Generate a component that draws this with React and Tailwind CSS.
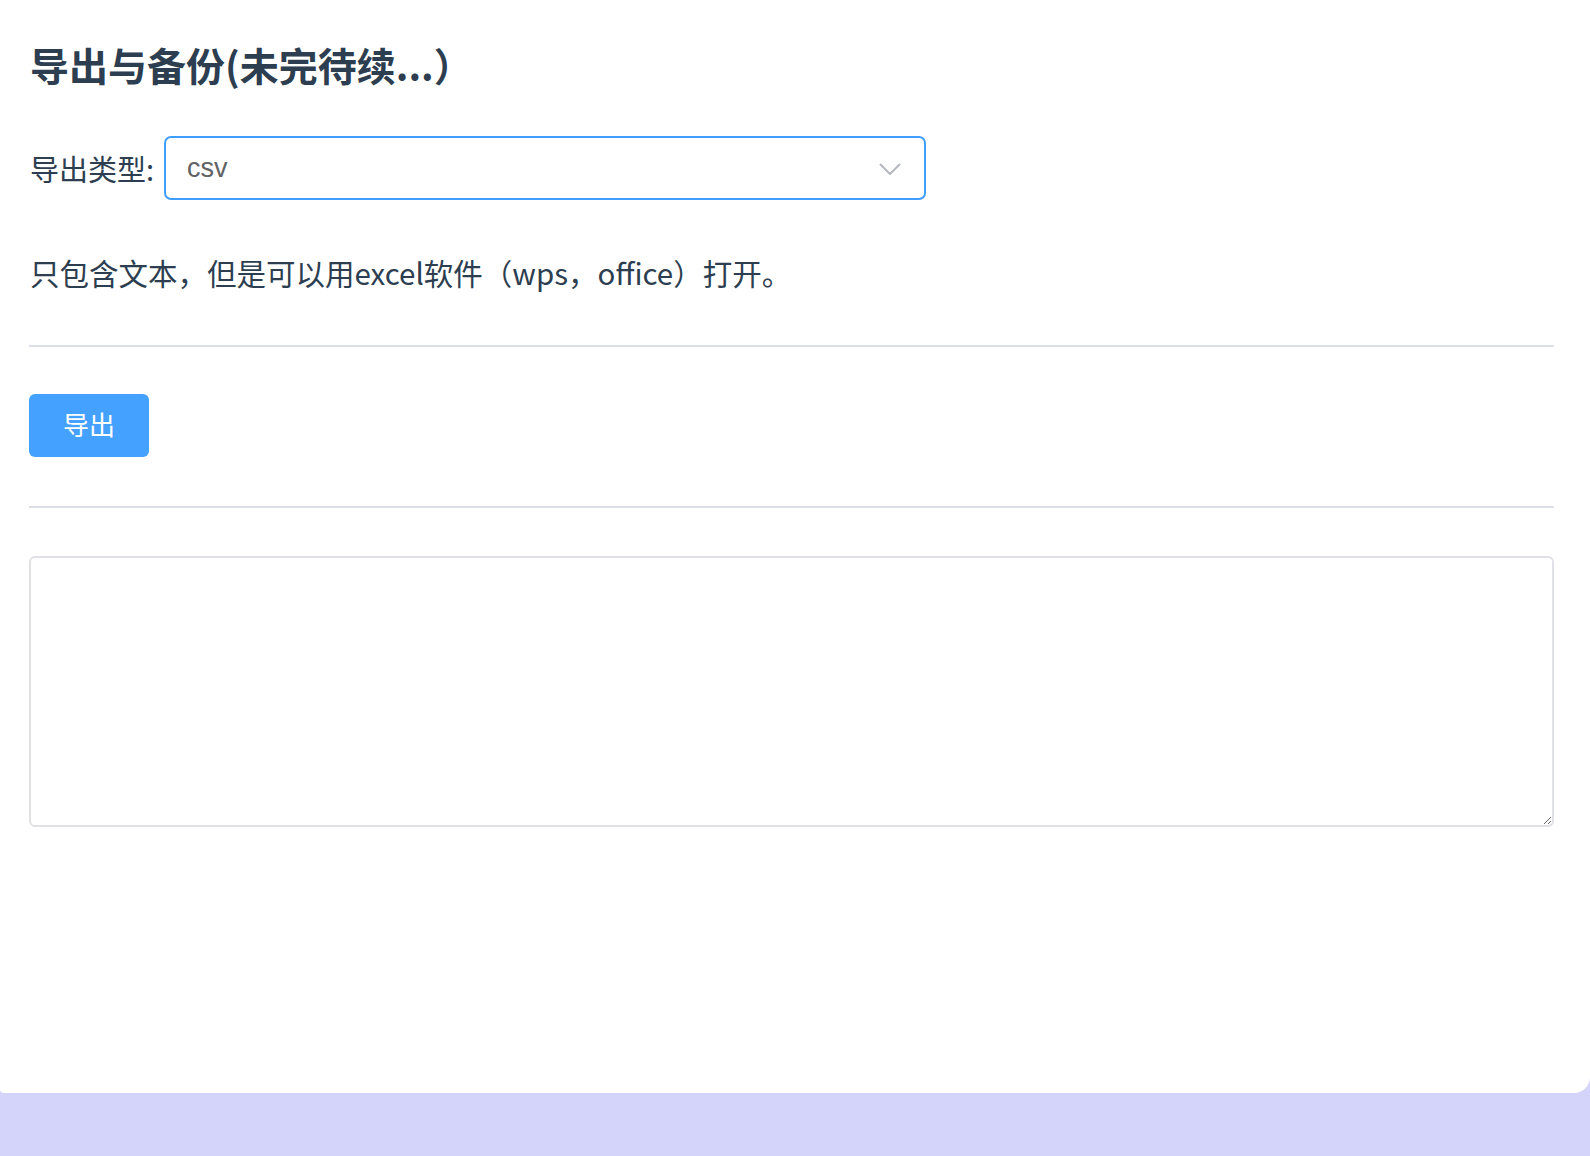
import React, { useState } from 'react';

const App = () => {
  const [type, setType] = useState('csv');
  const [output, setOutput] = useState('');

  return (
    <div className="min-h-screen bg-[#d4d3f9]" style={{ fontFamily: '"Noto Sans CJK SC", sans-serif' }}>
      <div className="h-[1093px] bg-white rounded-br-[16px] rounded-bl-[4px] pl-[29px] pr-[36px] pt-[40px]">
        <h1 className="text-[39px] font-bold leading-[48px] text-[#2c3e50] pl-px">导出与备份(未完待续...）</h1>

        <div className="mt-[48px] flex items-center">
          <span className="text-[29px] leading-[40px] text-[#2c3e50] pl-px">导出类型:</span>
          <div className="ml-[10px] relative w-[762px] h-[64px] border-2 border-[#409eff] rounded-[7px] flex items-center px-[21px]">
            <span className="text-[27px] text-[#606266] leading-none" style={{ fontFamily: '"Liberation Sans", sans-serif' }}>{type}</span>
            <svg className="absolute right-[23px] top-[25px]" width="22" height="12" viewBox="0 0 22 12" fill="none">
              <path d="M1 1 L11 11 L21 1" stroke="#b4b7bd" strokeWidth="2" />
            </svg>
          </div>
        </div>

        <p className="mt-[52px] text-[29.5px] leading-[40px] text-[#2c3e50] pl-px">只包含文本，但是可以用excel软件（wps，office）打开。</p>

        <div className="mt-[53px] h-[2px] bg-[#dcdfe6]" />

        <button
          onClick={() => setOutput('')}
          className="mt-[47px] w-[120px] h-[63px] rounded-[6px] bg-[#45a1ff] text-white text-[26px] leading-none flex items-center justify-center pb-[3px]"
        >
          导出
        </button>

        <div className="mt-[49px] h-[2px] bg-[#dcdfe6]" />

        <textarea
          value={output}
          onChange={(e) => setOutput(e.target.value)}
          className="mt-[48px] block w-full h-[271px] border-2 border-[#dfe1e6] rounded-[6px] outline-none p-2"
        />
      </div>
    </div>
  );
};

export default App;
